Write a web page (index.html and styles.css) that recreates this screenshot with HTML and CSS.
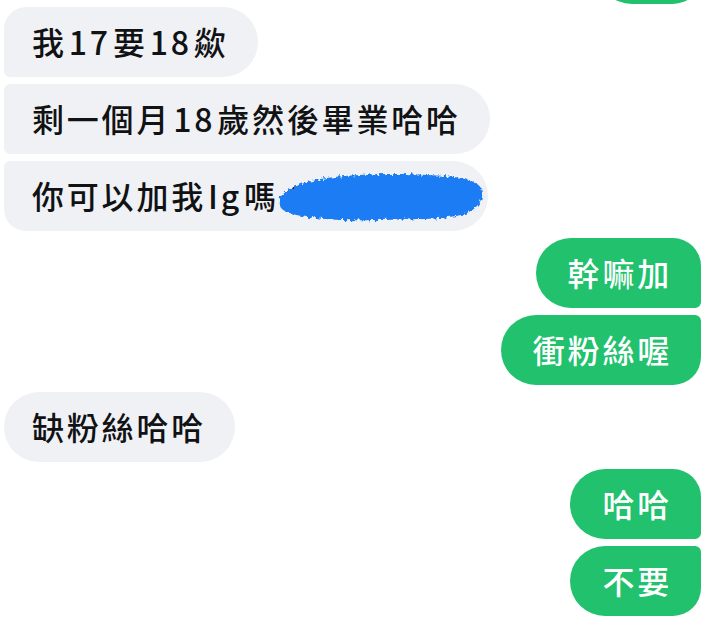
FILE: index.html
```html
<!DOCTYPE html>
<html lang="zh-Hant">
<head>
  <meta charset="UTF-8" />
  <meta name="viewport" content="width=device-width, initial-scale=1.0" />
  <title>Chat</title>
  <link rel="stylesheet" href="styles.css">
</head>
<body>
  <div class="thread">
    <div class="msg me last prev"></div>

    <div class="msg them first">我<span class="latin">17</span>要<span class="latin">18</span>歘</div>
    <div class="msg them mid">剩一個月<span class="latin">18</span>歲然後畢業哈哈</div>
    <div class="msg them last">你可以加我<span class="latin">Ig</span>嗎<span class="redact">
        <span class="hidden-id">：ab</span>
        <svg class="scribble" width="220" height="60" viewBox="0 0 220 60">
          <defs>
            <filter id="rough" x="-10%" y="-20%" width="120%" height="140%">
              <feTurbulence type="fractalNoise" baseFrequency="0.3" numOctaves="2" seed="4" />
              <feDisplacementMap in="SourceGraphic" scale="7" />
            </filter>
          </defs>
          <path filter="url(#rough)" fill="#1b7bf4"
            d="M8 34 C12 24 30 16 56 12 C86 8 124 7 156 9 C182 10 204 12 210 22 C214 32 208 42 194 48 C172 54 140 53 110 54 C80 55 52 54 30 50 C14 47 6 42 8 34 Z" />
        </svg>
      </span></div>

    <div class="msg me first">幹嘛加</div>
    <div class="msg me last">衝粉絲喔</div>

    <div class="msg them single">缺粉絲哈哈</div>

    <div class="msg me first">哈哈</div>
    <div class="msg me last">不要</div>
  </div>
</body>
</html>
```

FILE: styles.css
```css
:root {
  --them: #f0f1f5;
  --me: #21c16e;
  --text: #111214;
  --big: 35px;
  --small: 6px;
}

body {
  margin: 0;
  background: #fff;
  font-family: "Noto Sans CJK TC", "Noto Sans CJK SC", sans-serif;
  overflow: hidden;
}

.thread {
  display: flex;
  flex-direction: column;
  gap: 7px;
  padding: 0 24px 0 4px;
}

.msg {
  box-sizing: border-box;
  height: 70px;
  padding: 11px 29px 13px 28px;
  font-size: 32px;
  font-weight: 500;
  line-height: 46px;
  letter-spacing: 2.8px;
  white-space: nowrap;
  border-radius: var(--big);
}

/* small gap between CJK and latin runs, like the phone does */
.latin {
  margin: 0 2px;
}

.them {
  align-self: flex-start;
  background: var(--them);
  color: var(--text);
}

.me {
  align-self: flex-end;
  padding-left: 32px;
  background: var(--me);
  color: #fff;
}

.them.first {
  border-radius: 22px var(--big) var(--big) var(--small);
}

.them.mid {
  border-radius: var(--small) var(--big) var(--big) var(--small);
}

.them.last {
  border-radius: var(--small) var(--big) var(--big) 22px;
}

.me.first {
  border-radius: var(--big) 28px var(--small) var(--big);
}

.me.last {
  border-radius: var(--big) var(--small) 28px var(--big);
}

.prev {
  margin-top: -66px;
  margin-bottom: -4px;
  width: 104px;
}

.redact {
  position: relative;
  display: inline-block;
  width: 180px;
}

.hidden-id {
  color: var(--text);
}

.scribble {
  position: absolute;
  left: -8px;
  top: -6px;
}
```
